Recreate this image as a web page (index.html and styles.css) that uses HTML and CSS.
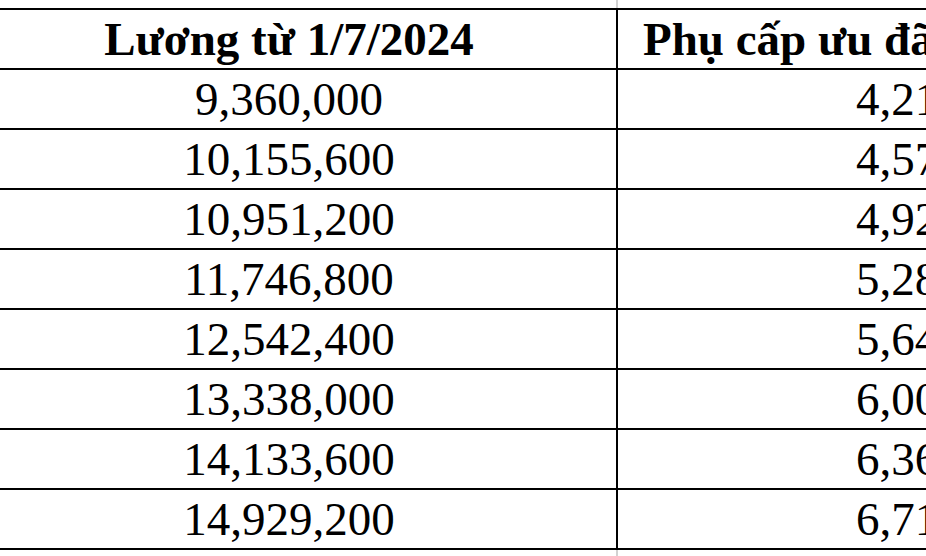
FILE: index.html
```html
<!DOCTYPE html>
<html lang="vi">
<head>
<meta charset="utf-8">
<title>Bảng lương</title>
<link rel="stylesheet" href="styles.css">
</head>
<body>
<div class="sheet">
  <div class="grid-gap"><div class="gap-cell"></div><div></div></div>
  <div class="table">
    <div class="row head">
      <div class="cell c1">Lương từ 1/7/2024</div>
      <div class="cell c2">Phụ cấp ưu đãi 45%</div>
    </div>
    <div class="row"><div class="cell c1">9,360,000</div><div class="cell c2">4,212,000</div></div>
    <div class="row"><div class="cell c1">10,155,600</div><div class="cell c2">4,570,020</div></div>
    <div class="row"><div class="cell c1">10,951,200</div><div class="cell c2">4,928,040</div></div>
    <div class="row"><div class="cell c1">11,746,800</div><div class="cell c2">5,286,060</div></div>
    <div class="row"><div class="cell c1">12,542,400</div><div class="cell c2">5,644,080</div></div>
    <div class="row"><div class="cell c1">13,338,000</div><div class="cell c2">6,002,100</div></div>
    <div class="row"><div class="cell c1">14,133,600</div><div class="cell c2">6,360,120</div></div>
    <div class="row"><div class="cell c1">14,929,200</div><div class="cell c2">6,718,140</div></div>
  </div>
  <div class="grid-gap"><div class="gap-cell"></div><div></div></div>
</div>
</body>
</html>
```
FILE: styles.css
```css
html, body {
  margin: 0;
  padding: 0;
  background: #ffffff;
  overflow: hidden;
  width: 926px;
  height: 556px;
}
.sheet {
  margin-left: -38px;
  width: 1400px;
  font-family: "Liberation Serif", "Times New Roman", serif;
  color: #000;
}
.grid-gap {
  display: grid;
  grid-template-columns: 656px 1fr;
  height: 8px;
}
.gap-cell {
  border-right: 2px solid #d2d2d2;
}
.table {
  border-top: 2px solid #000;
}
.row {
  display: grid;
  grid-template-columns: 656px 1fr;
  height: 58px;
  border-bottom: 2px solid #000;
}
.cell {
  display: flex;
  align-items: center;
  justify-content: center;
  font-size: 47px;
  line-height: 1;
  white-space: nowrap;
}
.c1 {
  border-right: 2px solid #000;
}
.c2 {
  justify-content: flex-start;
  padding-left: 238px;
}
.head .cell {
  font-weight: bold;
  font-size: 47px;
}
.head .c2 {
  padding-left: 25px;
}
```
